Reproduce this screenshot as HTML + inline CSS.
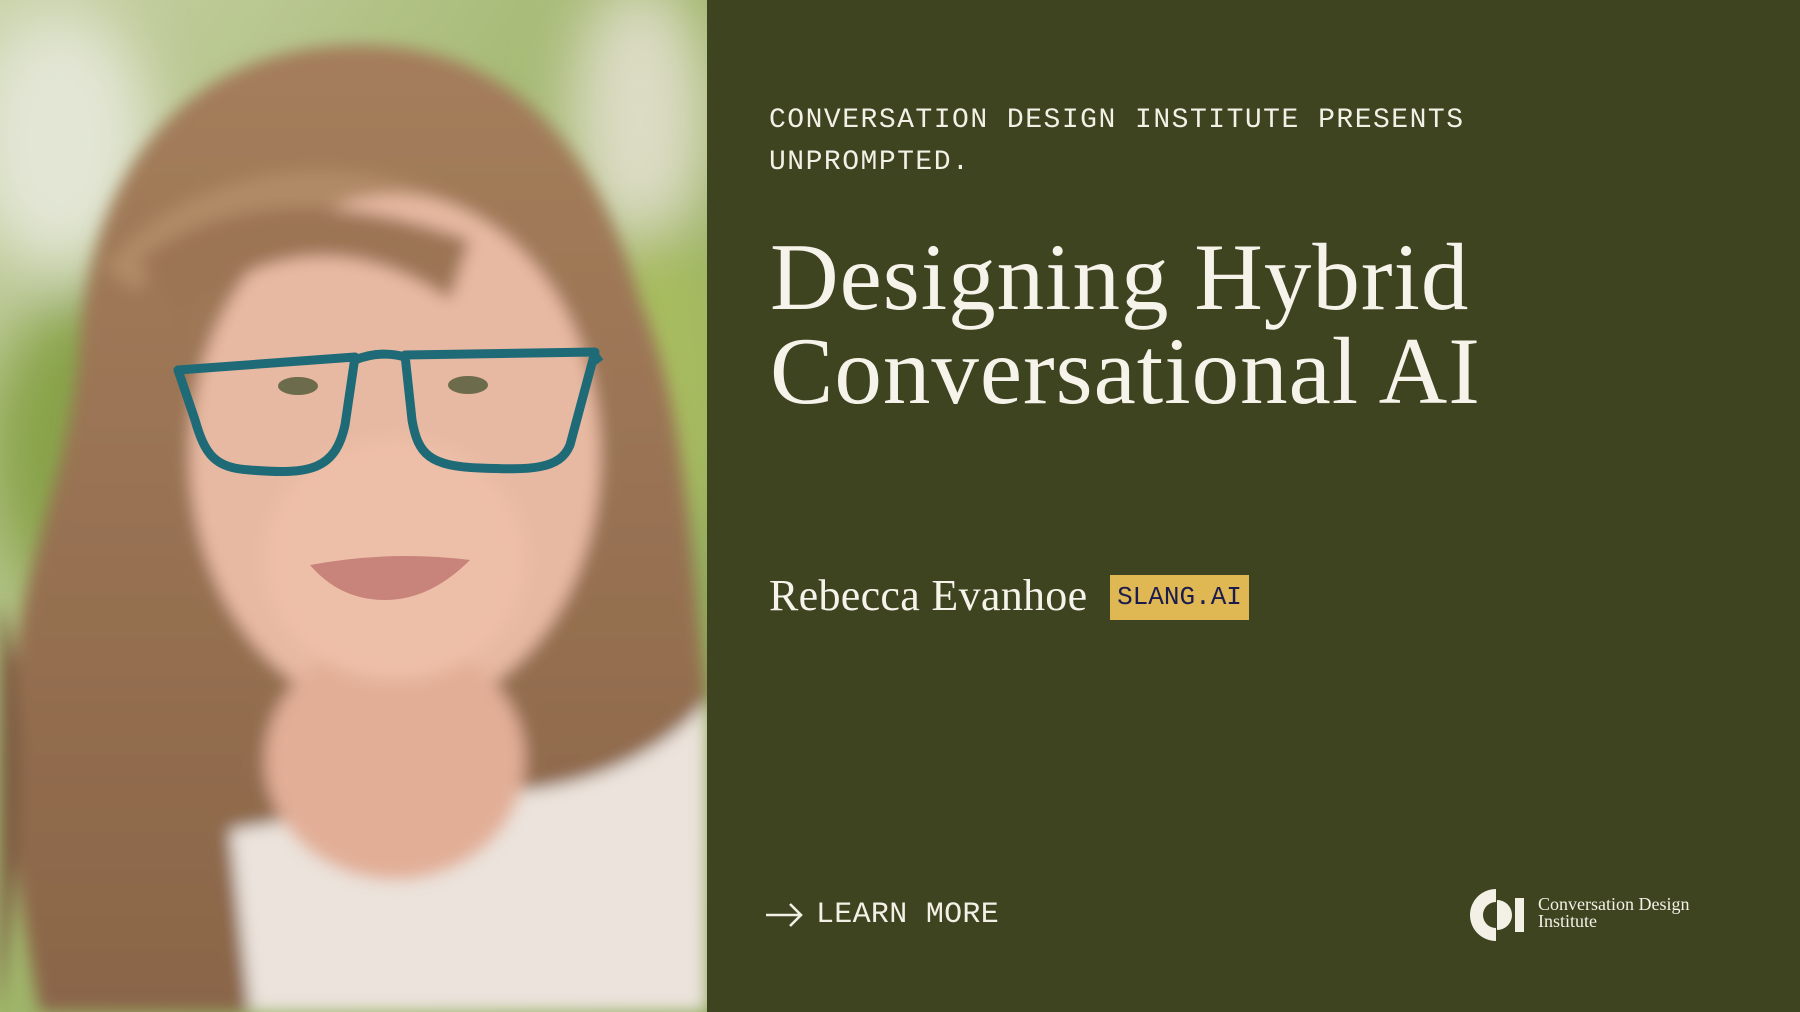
<!DOCTYPE html>
<html><head><meta charset="utf-8"><style>
html,body{margin:0;padding:0}
body{width:1800px;height:1012px;background:#3e4320;position:relative;overflow:hidden;font-family:"Liberation Sans",sans-serif}
.photo{position:absolute;left:0;top:0;width:707px;height:1012px;overflow:hidden}
.mono{font-family:"Liberation Mono",monospace;color:#f3f0e6}
#pre{position:absolute;left:769px;top:100px;font-size:28px;line-height:42px;letter-spacing:1.5px}
#title{position:absolute;left:770px;top:230px;font-family:"Liberation Serif",serif;font-size:95px;line-height:94px;color:#f6f3ea;letter-spacing:1px}
#name{position:absolute;left:769px;top:570px;font-family:"Liberation Serif",serif;font-size:44px;color:#f6f3ea;letter-spacing:0.3px}
#tag{position:absolute;left:1110px;top:575px;width:139px;height:45px;background:#dfb753;color:#1c1b4e;font-family:"Liberation Mono",monospace;font-size:26px;line-height:45px;text-align:center}
#learn{position:absolute;left:816px;top:898px;font-size:30px;letter-spacing:0.3px}
#logotext{position:absolute;left:1538px;top:896px;font-family:"Liberation Serif",serif;font-size:18px;line-height:17px;color:#f3f0e6}
</style></head><body>
<div class="photo">
<svg width="707" height="1012" viewBox="0 0 707 1012">
<defs>
<filter id="b" x="-20%" y="-20%" width="140%" height="140%"><feGaussianBlur stdDeviation="30"/></filter>
<filter id="s" x="-20%" y="-20%" width="140%" height="140%"><feGaussianBlur stdDeviation="8"/></filter>
<linearGradient id="bg" x1="0" y1="0" x2="1" y2="1"><stop offset="0" stop-color="#c9d2a8"/><stop offset="0.5" stop-color="#9fb56a"/><stop offset="1" stop-color="#8aa655"/></linearGradient>
<linearGradient id="hair" x1="0" y1="0" x2="0" y2="1"><stop offset="0" stop-color="#a57e5c"/><stop offset="1" stop-color="#8a6548"/></linearGradient>
</defs>
<rect width="707" height="1012" fill="url(#bg)"/>
<g filter="url(#b)">
<ellipse cx="60" cy="140" rx="90" ry="130" fill="#e3e6d5"/>
<ellipse cx="640" cy="120" rx="70" ry="140" fill="#dcdcc4"/>
<ellipse cx="90" cy="450" rx="100" ry="150" fill="#88a34a"/>
<ellipse cx="660" cy="380" rx="70" ry="160" fill="#a7bb5f"/>
</g>
<g filter="url(#s)">
<path d="M360 45 C180 45 90 180 80 340 C70 480 20 560 10 700 C0 820 40 1012 40 1012 L707 1012 L707 700 C690 560 690 420 640 300 C600 160 520 45 360 45Z" fill="url(#hair)"/>
<path d="M0 600 C30 700 20 860 0 1012Z" fill="#7a5a40"/>
<path d="M120 280 C200 180 380 150 500 260" stroke="#b08a66" stroke-width="40" fill="none"/>
<path d="M230 830 L250 1012 L707 1012 L707 700 C660 760 560 800 470 790 Z" fill="#ebe3dc"/>
<ellipse cx="395" cy="455" rx="205" ry="260" fill="#e8b9a2"/>
<ellipse cx="395" cy="760" rx="130" ry="120" fill="#e2ae96"/>
<ellipse cx="395" cy="560" rx="130" ry="120" fill="#eebfa8"/>
<path d="M140 260 C220 200 330 190 470 240 L450 300 C350 230 250 250 180 320Z" fill="#9c7454"/>
</g>
<g fill="none" stroke="#1f6a77" stroke-width="9" stroke-linejoin="round">
<path d="M178 370 L355 357 L345 425 C335 470 310 475 250 470 C215 468 205 455 195 420 Z"/>
<path d="M405 355 L595 352 L570 445 C560 470 530 470 480 468 C430 466 418 455 412 420 Z"/>
<path d="M355 360 Q380 350 405 357"/>
</g>
<path d="M595 355 L600 362" stroke="#1f6a77" stroke-width="8"/>
<ellipse cx="298" cy="386" rx="20" ry="9" fill="#6c6b4c"/>
<ellipse cx="468" cy="385" rx="20" ry="9" fill="#6c6b4c"/>
<path d="M310 565 Q390 550 470 560 Q430 600 385 600 Q340 600 310 565Z" fill="#c8837a"/>
</svg>
</div>
<div id="pre" class="mono">CONVERSATION DESIGN INSTITUTE PRESENTS<br>UNPROMPTED.</div>
<div id="title">Designing Hybrid<br>Conversational AI</div>
<div id="name">Rebecca Evanhoe</div>
<div id="tag">SLANG.AI</div>
<svg style="position:absolute;left:764px;top:901px" width="40" height="28" viewBox="0 0 40 28"><path d="M2 14 H37 M26 3 L37 14 L26 25" stroke="#f3f0e6" stroke-width="2.6" fill="none"/></svg>
<div id="learn" class="mono">LEARN MORE</div>
<svg style="position:absolute;left:1469px;top:888px" width="56" height="54" viewBox="0 0 56 54"><path d="M27 1 A26 26 0 1 0 27 53 L27 40 A13 13 0 0 1 27 14 Z" fill="#f3f0e6"/><rect x="46" y="10" width="9" height="34" fill="#f3f0e6"/><path d="M28 12 A15 15 0 0 1 28 42Z" fill="#f3f0e6"/></svg>
<div id="logotext">Conversation Design<br>Institute</div>
</body></html>
